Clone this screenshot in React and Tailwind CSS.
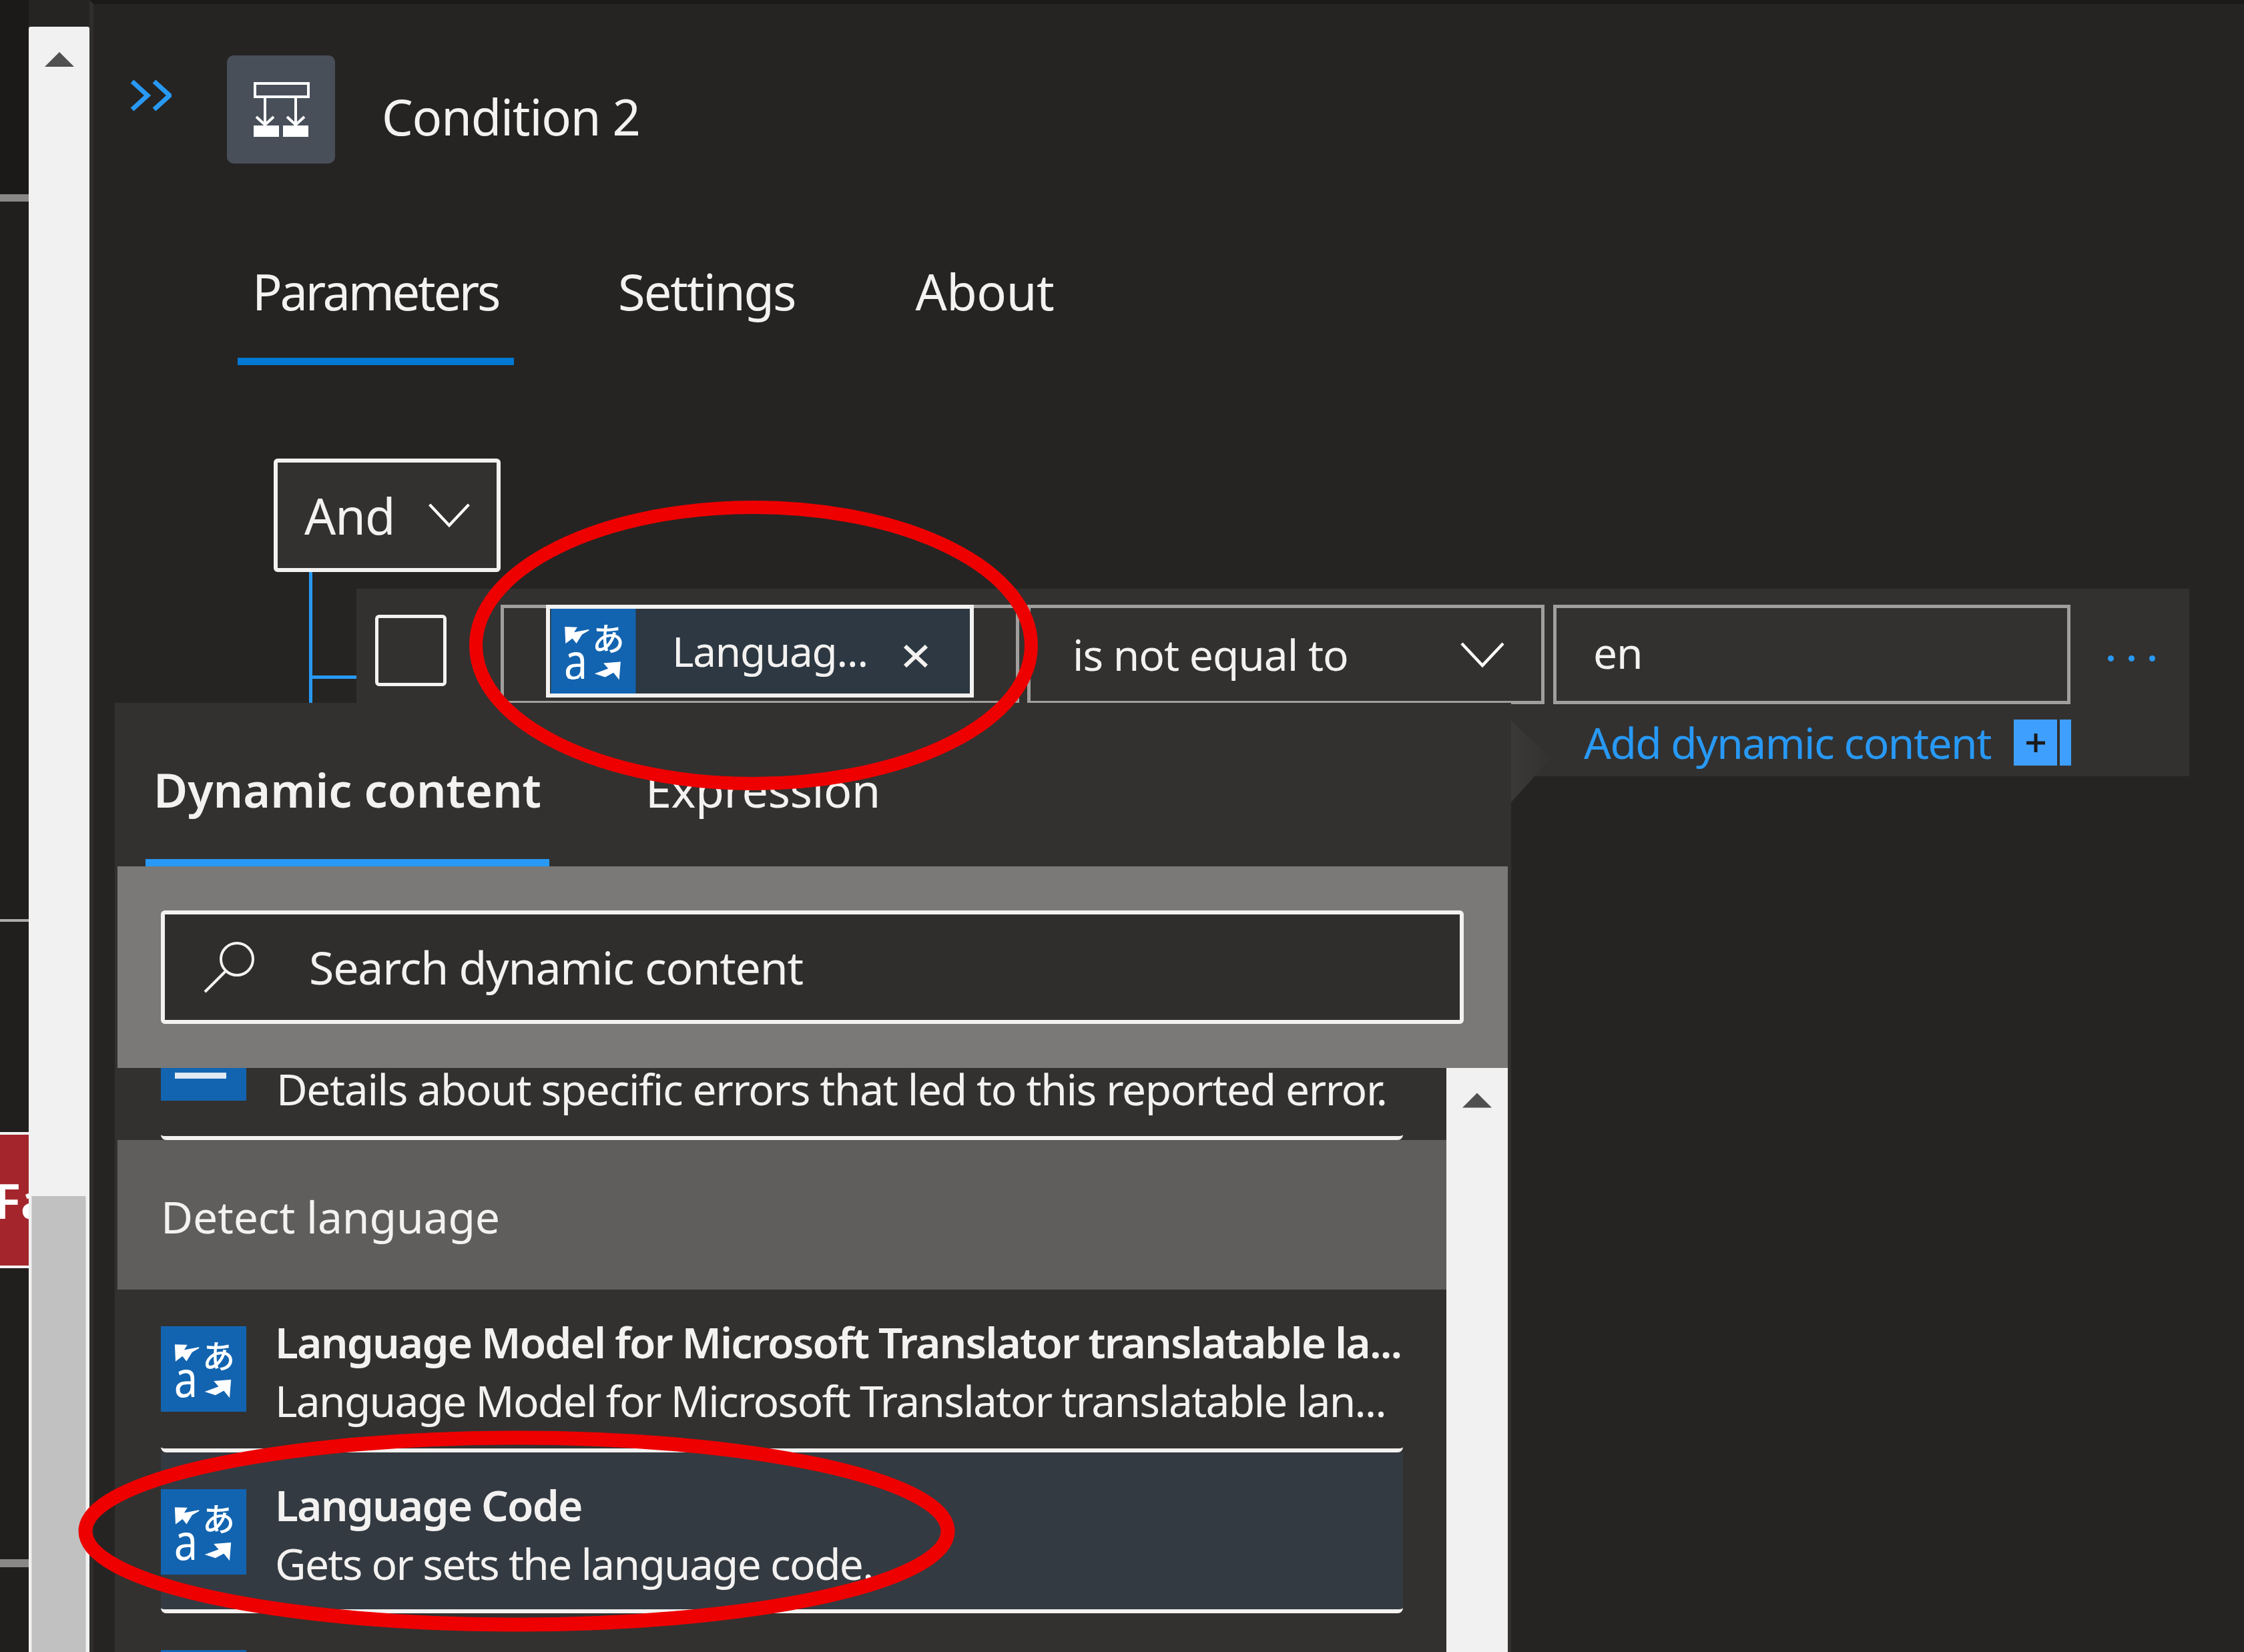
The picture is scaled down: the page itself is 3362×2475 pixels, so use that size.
import React from 'react';

const font = { fontFamily: '"Noto Sans", sans-serif' };

const TranslatorIcon = ({ className }) => (
  <svg viewBox="0 0 130 130" className={className}>
    <rect width="130" height="130" fill="#1264b0" />
    <polygon points="22,28.5 39,29 34,37 58,32.5 47,39 39,52 33,44.5 23,52" fill="#fff" stroke="#fff" strokeWidth="1.5" />
    <polygon points="106,82 82,84 89,92 69,99.5 83,104 96,97 104,107" fill="#fff" stroke="#fff" strokeWidth="1.5" />
    <text x="63" y="64" fontSize="50" fontWeight="500" fill="#fff" style={{ fontFamily: '"Noto Sans CJK JP", sans-serif' }}>あ</text>
    <text x="20" y="108" fontSize="76" fill="#fff" textLength="36" lengthAdjust="spacingAndGlyphs" style={{ fontFamily: '"Noto Sans", sans-serif' }}>a</text>
  </svg>
);

const ConditionIcon = () => (
  <svg viewBox="0 0 162 162" className="w-[162px] h-[162px]">
    <rect x="42" y="42" width="80" height="20" fill="none" stroke="#fff" strokeWidth="4" />
    <path d="M57 62V104M103 62V104" stroke="#fff" strokeWidth="4" fill="none" />
    <path d="M44 92L57 104L70 92M90 92L103 104L116 92" stroke="#fff" strokeWidth="4" fill="none" />
    <rect x="40" y="105" width="38" height="17" fill="#fff" />
    <rect x="84" y="105" width="38" height="17" fill="#fff" />
  </svg>
);

const Chevron = ({ className }) => (
  <svg viewBox="0 0 66 38" className={className}>
    <path d="M2 2L33 35L64 2" fill="none" stroke="#fff" strokeWidth="4.5" />
  </svg>
);

const ScrollUp = ({ className }) => (
  <svg viewBox="0 0 44 22" className={className}>
    <polygon points="22,0 44,22 0,22" fill="#505050" />
  </svg>
);

const ListItem = ({ title, desc, selected, height }) => (
  <div
    className={`flex gap-[43px] ml-[65px] mr-[65px] pt-[54px] border-b-[6px] border-[#f3f2f1] rounded-b-[8px] ${height} ${selected ? 'bg-[#343a41]' : ''}`}
  >
    <TranslatorIcon className="w-[128px] h-[130px] shrink-0" />
    <div className="-mt-[19px] text-[64px] leading-[88px] whitespace-nowrap text-[#f3f2f1]">
      <div className="font-semibold tracking-[-1.85px]">{title}</div>
      <div className="tracking-[-1.7px]">{desc}</div>
    </div>
  </div>
);

export default function App() {
  return (
    <div className="relative flex w-[3362px] h-[2475px] overflow-hidden bg-[#252423]" style={font}>
      {/* page behind the panel, cut off at the left */}
      <div className="flex flex-col w-[43px] shrink-0 bg-[#201f1e] overflow-hidden">
        <div className="h-[291px] bg-[#1b1a19] shrink-0" />
        <div className="h-[11px] bg-[#8a8886] shrink-0" />
        <div className="h-[1075px] shrink-0" />
        <div className="h-[4px] bg-[#b0aead] shrink-0" />
        <div className="h-[315px] shrink-0" />
        <div className="h-[204px] bg-[#a4262c] border-y-[4px] border-[#f3f2f1] shrink-0 flex items-center text-[72px] font-semibold text-white whitespace-nowrap">
          <span className="-ml-[8px]">Fa</span>
        </div>
        <div className="h-[436px] shrink-0" />
        <div className="h-[12px] bg-[#8a8886] shrink-0" />
      </div>

      {/* page scrollbar */}
      <div className="w-[91px] shrink-0 mt-[40px] bg-[#f1f1f1] flex flex-col items-center rounded-t-[3px]">
        <ScrollUp className="w-[44px] h-[22px] mt-[38px]" />
        <div className="w-[81px] h-[683px] mt-[1692px] bg-[#c1c1c1] -translate-x-[0.5px]" />
      </div>

      {/* side panel */}
      <div className="flex-1 border-l-[6px] border-t-[6px] border-[#2f2e2d] border-t-[#1b1a19] text-[#f3f2f1]">
        <div className="flex">
          <svg viewBox="0 0 62 48" className="w-[62px] h-[48px] ml-[55px] mt-[113px]">
            <path d="M3 3L26 24L3 45M36 3L59 24L36 45" fill="none" stroke="#2899f5" strokeWidth="7" />
          </svg>
          <div className="w-[162px] h-[162px] ml-[83px] mt-[77px] rounded-[10px] bg-[#484f59]">
            <ConditionIcon />
          </div>
          <div className="ml-[70px] mt-[119px] text-[74px] leading-[100px] tracking-[-1.2px] whitespace-nowrap">Condition 2</div>
        </div>

        <div className="flex mt-[142px] ml-[216px] text-[74px] leading-[100px] whitespace-nowrap">
          <div className="w-[414px] h-[160px] pl-[22px] border-b-[11px] border-[#0078d4] tracking-[-3.3px]">Parameters</div>
          <div className="ml-[156px] tracking-[-2px]">Settings</div>
          <div className="ml-[180px] tracking-[-0.5px]">About</div>
        </div>

        <div className="relative">
          <div className="flex items-center justify-between w-[340px] h-[170px] ml-[270px] mt-[140px] pl-[40px] pr-[38px] bg-[#323130] border-[6px] border-[#f3f2f1] rounded-[6px] text-[74px] tracking-[-1px]">
            And
            <Chevron className="w-[66px] h-[36px]" />
          </div>
          <div className="absolute left-[323px] top-[170px] w-[5px] h-[200px] bg-[#2899f5]" />
          <div className="absolute left-[323px] top-[325px] w-[72px] h-[5px] bg-[#2899f5]" />

          <div className="relative w-[2746px] h-[281px] ml-[394px] mt-[25px] bg-[#323130] flex flex-col">
            <div className="flex pt-[24px]">
              <div className="w-[107px] h-[107px] ml-[28px] mt-[15px] border-[5px] border-[#f3f2f1] rounded-[6px]" />
              <div className="w-[777px] h-[149px] ml-[81px] pl-[63px] border-[5px] border-[#a19f9d]">
                <div className="flex items-center w-[641px] h-[139px] -mt-[5px] border-[6px] border-[#f3f2f1] bg-[#2d3842]">
                  <TranslatorIcon className="w-[130px] h-[127px]" />
                  <span className="ml-[53px] text-[62px] tracking-[-1.2px] text-[#f3f2f1]">Languag...</span>
                  <svg viewBox="0 0 38 34" className="w-[38px] h-[34px] ml-[53px] mt-[14px]">
                    <path d="M3 2L35 32M35 2L3 32" stroke="#f3f2f1" strokeWidth="6" fill="none" />
                  </svg>
                </div>
              </div>
              <div className="flex items-center justify-between w-[775px] h-[149px] ml-[12px] pl-[63px] pr-[55px] border-[5px] border-[#a19f9d]">
                <span className="text-[64px] tracking-[-1px]">is not equal to</span>
                <Chevron className="w-[66px] h-[38px]" />
              </div>
              <div className="flex items-center w-[775px] h-[149px] ml-[13px] pl-[55px] border-[5px] border-[#a19f9d] text-[64px] tracking-[-1px]">
                <span className="-mt-[6px]">en</span>
              </div>
              <div className="flex gap-[22px] ml-[56px] mt-[76px] h-[8px]">
                <span className="w-[9px] h-[9px] rounded-full bg-[#2899f5]" />
                <span className="w-[9px] h-[9px] rounded-full bg-[#2899f5]" />
                <span className="w-[9px] h-[9px] rounded-full bg-[#2899f5]" />
              </div>
            </div>
            <div className="flex items-center ml-[1839px] mt-[23px] h-[69px]">
              <span className="w-[609px] text-[64px] tracking-[-1.5px] text-[#2899f5] whitespace-nowrap">Add dynamic content</span>
              <span className="flex items-center justify-center w-[65px] h-[69px] ml-[35px] bg-[#3f9fff] text-[#1b1a19]">
                <svg viewBox="0 0 28 28" className="w-[28px] h-[28px]">
                  <path d="M14 0V28M0 14H28" stroke="#1b1a19" strokeWidth="5" />
                </svg>
              </span>
              <span className="w-[17px] h-[69px] ml-[4px] bg-[#3f9fff]" />
            </div>
          </div>
        </div>
      </div>

      {/* dynamic content flyout */}
      <div className="absolute left-[172px] top-[1053px] w-[2092px] h-[1422px] pl-[4px] pr-[5px] bg-[#323130] flex flex-col text-[#f3f2f1]">
        <div className="flex h-[245px] shrink-0 whitespace-nowrap">
          <div className="w-[605px] ml-[42px] h-[245px] border-b-[11px] border-[#2899f5] pl-[12px] pt-[80px] text-[70px] leading-[100px] font-semibold tracking-[0px]">
            Dynamic content
          </div>
          <div className="ml-[144px] pt-[80px] text-[70px] leading-[100px] tracking-[-0.5px]">Expression</div>
        </div>

        <div className="h-[302px] shrink-0 bg-[#7a7977] pt-[66px] pl-[65px] pr-[66px]">
          <div className="flex items-center h-[170px] pl-[58px] bg-[#2f2e2d] border-[6px] border-[#f3f2f1] rounded-[6px]">
            <svg viewBox="0 0 78 78" className="w-[78px] h-[78px]">
              <circle cx="50" cy="27" r="24" fill="none" stroke="#f3f2f1" strokeWidth="4" />
              <path d="M33 45L2 76" stroke="#f3f2f1" strokeWidth="4" />
            </svg>
            <span className="ml-[80px] text-[68px] tracking-[-1.2px] whitespace-nowrap">Search dynamic content</span>
          </div>
        </div>

        <div className="flex flex-1 min-h-0">
          <div className="flex-1 overflow-hidden">
            <div className="flex gap-[45px] h-[108px] ml-[65px] mr-[65px] border-b-[6px] border-[#f3f2f1] rounded-b-[8px]">
              <div className="w-[128px] h-[49px] shrink-0 bg-[#1264b0] pt-[7px] pl-[21px]">
                <div className="w-[77px] h-[9px] bg-[#e1e9f2]" />
              </div>
              <div className="text-[64px] leading-[88px] -mt-[12px] tracking-[-1.35px] whitespace-nowrap">
                Details about specific errors that led to this reported error.
              </div>
            </div>
            <div className="flex items-center h-[224px] pl-[65px] pt-[4px] bg-[#605e5c] text-[66px] tracking-[-0.15px]">Detect language</div>
            <ListItem
              height="h-[244px]"
              title="Language Model for Microsoft Translator translatable la..."
              desc="Language Model for Microsoft Translator translatable lan..."
            />
            <ListItem selected height="h-[241px]" title="Language Code" desc="Gets or sets the language code." />
            <div className="ml-[65px] mt-[55px] w-[128px] h-[10px] bg-[#1264b0]" />
          </div>
          <div className="w-[92px] shrink-0 bg-[#f1f1f1] flex justify-center pt-[37px]">
            <ScrollUp className="w-[44px] h-[23px]" />
          </div>
        </div>
      </div>

      {/* callout notch next to the flyout */}
      <svg viewBox="0 0 60 146" className="absolute left-[2264px] top-[1056px] w-[60px] h-[146px]">
        <defs>
          <linearGradient id="notch">
            <stop offset="0" stopColor="#3a3938" />
            <stop offset="1" stopColor="#333231" />
          </linearGradient>
        </defs>
        <polygon points="0,24 60,80 36,106 0,146" fill="url(#notch)" />
      </svg>

      {/* red annotation ellipses */}
      <svg viewBox="0 0 3362 2475" className="absolute inset-0 w-[3362px] h-[2475px] pointer-events-none">
        <ellipse cx="1129" cy="967" rx="416" ry="207" fill="none" stroke="#ee0000" strokeWidth="20" />
        <ellipse cx="774" cy="2294" rx="646" ry="140" fill="none" stroke="#ee0000" strokeWidth="21" />
      </svg>
    </div>
  );
}
